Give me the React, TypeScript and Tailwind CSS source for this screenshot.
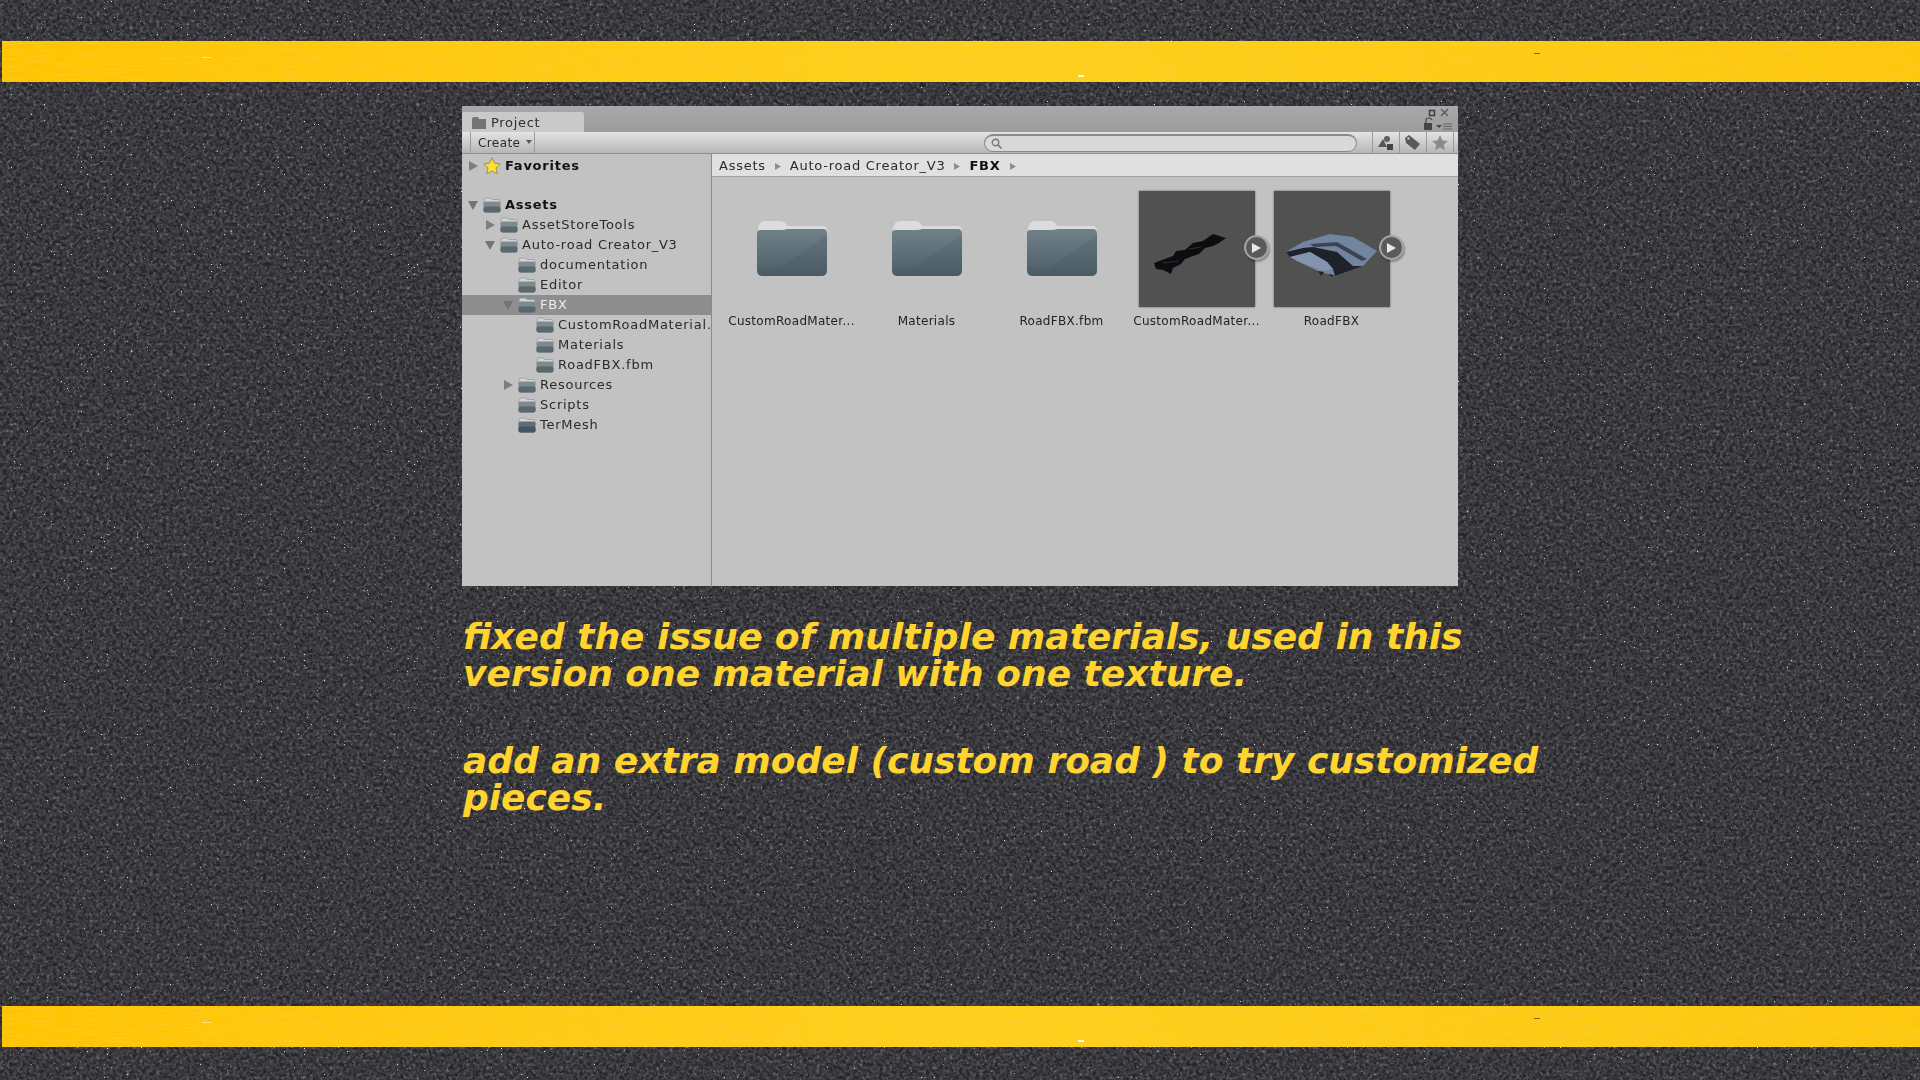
import React from "react";

const Asphalt = () => (
  <svg className="absolute inset-0 w-full h-full" width="1920" height="1080" aria-hidden="true">
    <filter id="grain" x="0" y="0" width="100%" height="100%">
      <feTurbulence type="fractalNoise" baseFrequency="0.3" numOctaves="2" seed="7" />
      <feColorMatrix values="0 0 0 0 0.27  0 0 0 0 0.27  0 0 0 0 0.31  1.8 0 0 0 -0.78" />
    </filter>
    <filter id="dark" x="0" y="0" width="100%" height="100%">
      <feTurbulence type="fractalNoise" baseFrequency="0.24" numOctaves="2" seed="21" />
      <feColorMatrix values="0 0 0 0 0.05  0 0 0 0 0.05  0 0 0 0 0.06  2.6 0 0 0 -0.95" />
    </filter>
    <filter id="specks" x="0" y="0" width="100%" height="100%">
      <feTurbulence type="fractalNoise" baseFrequency="1.3" numOctaves="1" seed="3" />
      <feColorMatrix values="0 0 0 0 0.85  0 0 0 0 0.82  0 0 0 0 0.68  16 0 0 0 -11.9" />
    </filter>
    <rect width="1920" height="1080" fill="#262629" />
    <rect width="1920" height="1080" filter="url(#grain)" />
    <rect width="1920" height="1080" filter="url(#dark)" />
    <rect width="1920" height="1080" filter="url(#specks)" />
  </svg>
);

const YellowBand = () => (
  <div className="relative ml-[2px] h-[41px] bg-gradient-to-r from-[#ffc400] via-[#ffd01c] to-[#fdc70c] overflow-hidden">
    <svg className="absolute inset-0 w-full h-full" aria-hidden="true">
      <filter id="paint" x="0" y="0" width="100%" height="100%">
        <feTurbulence type="fractalNoise" baseFrequency="0.04 0.5" numOctaves="3" seed="11" />
        <feColorMatrix values="0 0 0 0 0.95  0 0 0 0 0.62  0 0 0 0 0.05  2.2 0 0 0 -0.95" />
      </filter>
      <rect width="100%" height="100%" filter="url(#paint)" opacity="0.55" />
    </svg>
    <div className="absolute left-[200px] top-[16px] h-[1px] w-[10px] bg-[#ffe08a]" />
    <div className="absolute left-[1076px] top-[34px] h-[2px] w-[6px] bg-[#fff6dc]" />
    <div className="absolute right-[380px] top-[12px] h-[1px] w-[6px] bg-[#7d6a1c]" />
  </div>
);

const Folder = () => (
  <svg className="w-[70px] h-[55px]" viewBox="0 0 70 55" aria-hidden="true">
    <defs>
      <linearGradient id="bigFolder" x1="0" y1="0" x2="0" y2="1">
        <stop offset="0" stopColor="#708189" />
        <stop offset="1" stopColor="#4d5e66" />
      </linearGradient>
    </defs>
    <path d="M1 10 Q1 0 8 0 H23 Q28 0 30 5 H66 Q70 5 70 11 V20 H1 Z" fill="#dcdcdc" />
    <path d="M0 12 Q0 9 4 9 H24 Q28 9 30 8 H66 Q70 8 70 13 V49 Q70 55 64 55 H6 Q0 55 0 49 Z" fill="url(#bigFolder)" />
    <path d="M70 14 L24 46 H0 V49 Q0 55 6 55 H64 Q70 55 70 49 Z" fill="#3f4f56" opacity="0.18" />
  </svg>
);

const TreeFolder = ({ dark }: { dark?: boolean }) => (
  <svg className="w-[18px] h-[16px]" viewBox="0 0 18 16" aria-hidden="true">
    <path d="M1 4 Q1 1 3 1 H7 Q8 1 9 2.5 H16 Q17 2.5 17 4 V7 H1 Z" fill="#d4d4d4" stroke="#8a8a8a" strokeWidth="0.6" />
    <rect x="0.5" y="4.5" width="17" height="11" rx="2" fill={dark ? "#5c6f7c" : "#7d8b8f"} />
    <rect x="0.5" y="9.5" width="17" height="6" rx="2" fill={dark ? "#46545e" : "#5a686d"} />
  </svg>
);

const Arrow = ({ open }: { open?: boolean }) => (
  <svg className="w-3 h-3 shrink-0" viewBox="0 0 12 12" aria-hidden="true">
    {open ? <path d="M1 2 H11 L6 11 Z" fill="#747474" /> : <path d="M2 1 L11 6 L2 11 Z" fill="#7e7e7e" />}
  </svg>
);

const Star = () => (
  <svg className="w-[18px] h-[18px] shrink-0" viewBox="0 0 24 24" aria-hidden="true">
    <path d="M12 1 L15.4 8.2 L23 9.2 L17.4 14.6 L18.9 22.5 L12 18.6 L5.1 22.5 L6.6 14.6 L1 9.2 L8.6 8.2 Z" fill="#fbe038" stroke="#8d7d3a" strokeWidth="1" />
  </svg>
);

type Row = { label: string; pad: string; arrow?: "open" | "closed"; bold?: boolean; selected?: boolean; star?: boolean; dark?: boolean };

const rows: Row[] = [
  { label: "Favorites", pad: "pl-[5px]", arrow: "closed", bold: true, star: true },
  { label: "", pad: "" },
  { label: "Assets", pad: "pl-[5px]", arrow: "open", bold: true },
  { label: "AssetStoreTools", pad: "pl-[22px]", arrow: "closed" },
  { label: "Auto-road Creator_V3", pad: "pl-[22px]", arrow: "open" },
  { label: "documentation", pad: "pl-[40px]" },
  { label: "Editor", pad: "pl-[40px]" },
  { label: "FBX", pad: "pl-[40px]", arrow: "open", selected: true },
  { label: "CustomRoadMaterial.fbm", pad: "pl-[58px]" },
  { label: "Materials", pad: "pl-[58px]" },
  { label: "RoadFBX.fbm", pad: "pl-[58px]" },
  { label: "Resources", pad: "pl-[40px]", arrow: "closed" },
  { label: "Scripts", pad: "pl-[40px]" },
  { label: "TerMesh", pad: "pl-[40px]", dark: true },
];

const TreeRow = ({ row }: { row: Row }) => (
  <div className={`flex items-center whitespace-nowrap ${row.label ? "h-[20px]" : "h-[19px]"} ${row.pad} ${row.selected ? "bg-[#8e8e8e] text-[#ececec]" : "text-[#2b2b2b]"}`}>
    {row.label && (
      <>
        {row.arrow ? <Arrow open={row.arrow === "open"} /> : <span className="w-3 shrink-0" />}
        <span className="ml-[4px] mr-[4px] flex shrink-0">
          {row.star ? <Star /> : <TreeFolder dark={row.dark} />}
        </span>
        <span className={row.bold ? "font-bold text-[#111111] tracking-[0.75px]" : "tracking-[0.75px]"}>{row.label}</span>
      </>
    )}
  </div>
);

const Crumb = () => (
  <svg className="w-[6px] h-[7px] mx-[9px] shrink-0" viewBox="0 0 7 8" aria-hidden="true">
    <path d="M0 0 L7 4 L0 8 Z" fill="#8c8c8c" />
  </svg>
);

const Play = () => (
  <div className="absolute right-[-14px] top-[44px] w-[25px] h-[25px] rounded-full bg-[#5a5a5a] border-2 border-[#a4a4a4] flex items-center justify-center shadow-[1px_2px_2px_rgba(0,0,0,0.3)]">
    <svg className="w-[10px] h-[10px]" viewBox="0 0 11 11" aria-hidden="true">
      <path d="M1 0 L11 5.5 L1 11 Z" fill="#e8e8e8" />
    </svg>
  </div>
);

const FolderCell = ({ label }: { label: string }) => (
  <div className="w-[135px] flex flex-col items-center">
    <div className="h-[116px] flex items-start pt-[30px]">
      <Folder />
    </div>
    <div className="mt-[5px] text-[12px] tracking-[0.3px] text-[#222222] whitespace-nowrap">{label}</div>
  </div>
);

const ModelCell = ({ label, children }: { label: string; children: React.ReactNode }) => (
  <div className="w-[135px] flex flex-col items-center">
    <div className="relative w-[116px] h-[116px] bg-[#515151] shadow-[0_0_2px_rgba(0,0,0,0.5)]">
      <svg className="w-full h-full" viewBox="0 0 116 116" aria-hidden="true">
        {children}
      </svg>
      <Play />
    </div>
    <div className="mt-[5px] text-[12px] tracking-[0.3px] text-[#222222] whitespace-nowrap">{label}</div>
  </div>
);

const ToolIcon = ({ children }: { children: React.ReactNode }) => (
  <div className="w-[27px] h-full border-r border-[#9a9a9a] flex items-center justify-center">
    <svg className="w-[18px] h-[18px]" viewBox="0 0 18 18" aria-hidden="true">
      {children}
    </svg>
  </div>
);

const ProjectWindow = () => (
  <div className="ml-[462px] mt-[24px] w-[996px] h-[480px] flex flex-col bg-[#c2c2c2] blur-[0.5px] font-['DejaVu_Sans',sans-serif] text-[13px] overflow-hidden">
    <div className="relative h-[26px] shrink-0 bg-gradient-to-b from-[#a8a8a8] to-[#9c9c9c] flex items-end">
      <div className="w-[122px] h-[20px] pt-[1px] bg-[#c9c9c9] rounded-t-[2px] flex items-center pl-[10px] text-[#2e2e2e] tracking-[0.7px]">
        <svg className="w-[14px] h-[12px] mr-[5px]" viewBox="0 0 14 12" aria-hidden="true">
          <path d="M0 2 Q0 0 2 0 H6 L7 2 H14 V12 H0 Z" fill="#757575" />
        </svg>
        Project
      </div>
      <div className="absolute right-[2px] top-[2px] w-[40px] h-[24px]">
        <svg className="w-full h-full" viewBox="0 0 40 24" aria-hidden="true">
          <rect x="13.5" y="2.5" width="5" height="5" fill="none" stroke="#3c3c3c" strokeWidth="1.5" />
          <path d="M25 1 L32 8 M32 1 L25 8" stroke="#555555" strokeWidth="1.2" />
          <rect x="8" y="15" width="8" height="7" fill="#444444" />
          <path d="M10 15 V12 Q10 10 13 10 Q15 10 16 12" fill="none" stroke="#444444" strokeWidth="1.2" />
          <path d="M20 17 H26 L23 20 Z" fill="#444444" />
          <path d="M27 16 H36 M27 18.5 H36 M27 21 H36" stroke="#666666" strokeWidth="1.2" />
        </svg>
      </div>
    </div>
    <div className="h-[22px] shrink-0 bg-gradient-to-b from-[#e4e4e4] to-[#b6b6b6] border-b border-[#8f8f8f] flex items-center">
      <div className="ml-[8px] w-[65px] h-full pt-[1px] border-x border-[#9a9a9a] flex items-center pl-[7px] text-[12px] text-[#2b2b2b] tracking-[0.4px]">
        Create
        <svg className="w-[6px] h-[4px] ml-[6px] mb-[3px]" viewBox="0 0 6 4" aria-hidden="true">
          <path d="M0 0 H6 L3 4 Z" fill="#555555" />
        </svg>
      </div>
      <div className="ml-[449px] w-[373px] h-[18px] rounded-full border border-[#8a8a8a] border-t-2 bg-[#d9d9d9] flex items-center pl-[6px]">
        <svg className="w-[11px] h-[11px]" viewBox="0 0 11 11" aria-hidden="true">
          <circle cx="4.5" cy="4.5" r="3.2" fill="none" stroke="#777777" strokeWidth="1.4" />
          <path d="M7 7 L10.5 10.5" stroke="#777777" strokeWidth="1.6" />
        </svg>
      </div>
      <div className="ml-[15px] h-full flex border-l border-[#9a9a9a]">
        <ToolIcon>
          <path d="M1 13 L6 5 L10 13 Z" fill="#555555" />
          <circle cx="10" cy="5" r="3" fill="#5e5e5e" />
          <rect x="10" y="10" width="6" height="6" fill="#444444" />
        </ToolIcon>
        <ToolIcon>
          <path d="M1 4 L5 1 L16 10 L11 16 L2 9 Z" fill="#5a5a5a" />
          <circle cx="4.5" cy="4.5" r="1.2" fill="#c6c6c6" />
        </ToolIcon>
        <ToolIcon>
          <path d="M9 1 L11.3 6.5 L17 7 L12.7 10.8 L14 16.5 L9 13.5 L4 16.5 L5.3 10.8 L1 7 L6.7 6.5 Z" fill="#8a8a8a" />
        </ToolIcon>
      </div>
    </div>
    <div className="flex flex-1 min-h-0">
      <div className="w-[250px] shrink-0 border-r border-[#8a8a8a] pt-[2px] overflow-hidden">
        {rows.map((row, i) => (
          <TreeRow key={i} row={row} />
        ))}
      </div>
      <div className="flex-1 flex flex-col">
        <div className="h-[23px] shrink-0 pt-[2px] bg-[#e0e0e0] border-b border-[#a0a0a0] flex items-center pl-[7px] text-[#2b2b2b] tracking-[0.75px]">
          Assets
          <Crumb />
          Auto-road Creator_V3
          <Crumb />
          <span className="font-bold text-[#111111]">FBX</span>
          <Crumb />
        </div>
        <div className="flex pt-[14px] pl-[12px]">
          <FolderCell label="CustomRoadMater..." />
          <FolderCell label="Materials" />
          <FolderCell label="RoadFBX.fbm" />
          <ModelCell label="CustomRoadMater...">
            <path d="M15 72 L34 65 L37 60 L46 59 L54 52 L64 50 L74 43 L87 47 L80 52 L74 55 L66 57 L60 63 L54 65 L46 68 L42 73 L34 77 L32 83 L24 79 L17 78 Z" fill="#0b0d10" />
            <path d="M24 72 L40 70 M50 58 L62 56" stroke="#3a2a26" strokeWidth="1" />
          </ModelCell>
          <ModelCell label="RoadFBX">
            <path d="M12 61 L29 51 L56 43 L79 46 L103 60 L89 75 L61 85 L46 81 L23 70 Z" fill="#7285a0" />
            <path d="M12 61 L29 57 L39 56 L63 61 L79 75 L89 75 L61 85 L59 78 L53 71 L36 61 L16 66 Z" fill="#1e222a" />
            <path d="M36 53 L63 51 L93 68 L88 70 L62 55 L40 56 Z" fill="#3b4452" />
            <path d="M16 66 L36 61 L53 71 L59 78 L49 80 L23 70 Z" fill="#8394ac" />
            <path d="M44 80 L47 85 L50 81 M54 83 L58 86 L60 84" fill="#1e222a" />
          </ModelCell>
        </div>
      </div>
    </div>
  </div>
);

const App: React.FC = () => {
  return (
    <div className="relative w-[1920px] h-[1080px] overflow-hidden bg-[#262629]">
      <Asphalt />
      <div className="relative h-full flex flex-col pt-[41px] pb-[33px]">
        <YellowBand />
        <ProjectWindow />
        <div className="ml-[463px] mt-[32px] font-['DejaVu_Sans',sans-serif] font-bold italic text-[36px] leading-[37px] text-[#ffd42e] whitespace-nowrap">
          <p>fixed the issue of multiple materials, used in this</p>
          <p>version one material with one texture.</p>
          <p className="mt-[50px]">add an extra model (custom road ) to try customized</p>
          <p>pieces.</p>
        </div>
        <div className="mt-auto">
          <YellowBand />
        </div>
      </div>
    </div>
  );
};

export default App;
